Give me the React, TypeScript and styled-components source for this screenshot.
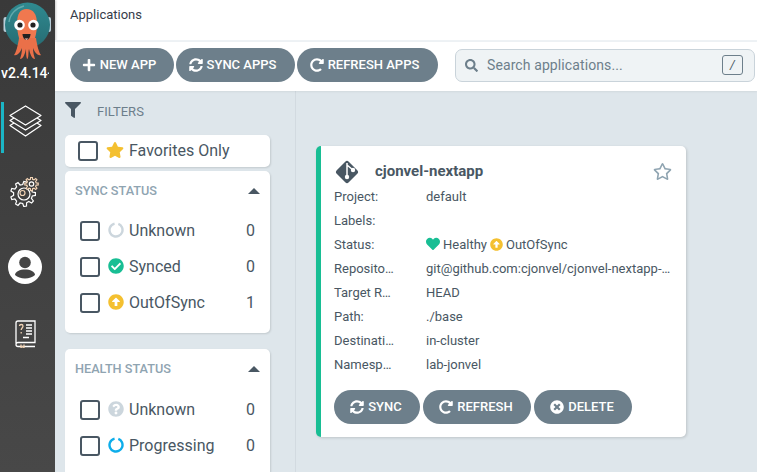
import React from "react";
import styled, { createGlobalStyle } from "styled-components";
import {
  FaArrowAltCircleUp,
  FaCheckCircle,
  FaFilter,
  FaHeart,
  FaPlus,
  FaQuestionCircle,
  FaRedoAlt,
  FaRegStar,
  FaSearch,
  FaStar,
  FaSyncAlt,
  FaTimesCircle,
} from "react-icons/fa";

const GlobalStyle = createGlobalStyle`
  html, body {
    margin: 0;
    height: 100%;
    overflow: hidden;
    background: #fff;
    font-family: Roboto, "Noto Sans", sans-serif;
  }
  #root { height: 100%; }
  * { box-sizing: border-box; }
`;

const Page = styled.div`
  display: flex;
  width: 757px;
  height: 472px;
  overflow: hidden;
`;

/* ---- sidebar ---- */

const Sidebar = styled.nav`
  flex: none;
  width: 55px;
  background: linear-gradient(180deg, #393939 0%, #484848 100%);
  box-shadow: 1px 0 2px rgba(0, 0, 0, 0.2);
  display: flex;
  flex-direction: column;
  color: #fff;
`;

const LogoBox = styled.div`
  height: 60px;
  display: flex;
  justify-content: center;
`;

const Version = styled.div`
  width: 48px;
  margin: 0 0 15px 1px;
  height: 27px;
  overflow: hidden;
  white-space: nowrap;
  font-size: 14px;
  font-weight: 500;
  line-height: 27px;
`;

const NavItem = styled.div<{ $h: number; $active?: boolean }>`
  height: ${(p) => p.$h}px;
  display: flex;
  align-items: ${(p) => (p.$active ? "flex-start" : "center")};
  justify-content: center;
  border-left: 3px solid ${(p) => (p.$active ? "#1bb5c5" : "transparent")};
  margin-left: 1px;
  padding: ${(p) => (p.$active ? "3px" : "0")} 9px 0 0;
`;

const Logo = () => (
  <svg width="53" height="60" viewBox="0 0 53 60">
    <defs>
      <linearGradient id="dome" x1="0" y1="0" x2="0" y2="1">
        <stop offset="0" stopColor="#2f8a90" />
        <stop offset="1" stopColor="#276c73" />
      </linearGradient>
    </defs>
    <rect x="2.500" y="17" width="4" height="15" rx="2" fill="#b8cdd8" />
    <rect x="46" y="17" width="4" height="15" rx="2" fill="#b8cdd8" />
    <circle cx="26.500" cy="25" r="22.500" fill="url(#dome)" />
    <path d="M8 22c1-8 7-14 15-16" fill="none" stroke="#62a9ac" strokeWidth="1.400" />
    <path
      d="M16 24c0-10 3-15 9.500-15S36 14 36 24c0 8-2 14-3 17H19c-1-3-3-9-3-17z"
      fill="#f0784f"
    />
    <path
      d="M18 38c-1 7-3 15-5 17 3 1 6-2 8-7 0 4-1 8-2 11 3 0 5-5 6-10 0 4 0 7 1 10 2 0 1-7 2-10 1 5 3 10 6 10-1-3-2-7-2-11 2 5 5 8 8 7-2-2-4-10-5-17z"
      fill="#ea7049"
    />
    <circle cx="18.500" cy="25" r="5.300" fill="#fff" />
    <circle cx="32.500" cy="25" r="5.300" fill="#fff" />
    <circle cx="19" cy="25" r="2.600" fill="#222" />
    <circle cx="32" cy="25" r="2.600" fill="#222" />
    <path d="M21.500 34h8c0 3-2 6-4 6s-4-3-4-6z" fill="#222" />
    <path d="M23.500 38.500h4l-2 1.500z" fill="#f6c5b8" />
  </svg>
);

const LayersIcon = () => (
  <svg width="33" height="32" viewBox="0 0 33 32" fill="none" stroke="#fff" strokeWidth="1.300" strokeLinejoin="round">
    <path d="M16.500 1 32 10.500 16.500 20 1 10.500Z" />
    <path d="M5 13 1 15.500 16.500 25 32 15.500 28 13" />
    <path d="M5 18 1 20.500 16.500 31 32 20.500 28 18" />
  </svg>
);

// outline of a cog wheel, teeth alternate between the two radii
const gearPoints = (cx: number, cy: number, outer: number, inner: number, teeth: number) => {
  const pts: string[] = [];
  for (let i = 0; i < teeth; i++) {
    const step = (2 * Math.PI) / teeth;
    const a = i * step;
    [
      [-0.3, inner],
      [-0.16, outer],
      [0.16, outer],
      [0.3, inner],
    ].forEach(([f, r]) => {
      pts.push(`${(cx + Math.cos(a + f * step) * r).toFixed(1)},${(cy + Math.sin(a + f * step) * r).toFixed(1)}`);
    });
  }
  return pts.join(" ");
};

const GearsIcon = () => (
  <svg width="30" height="30" viewBox="0 0 30 30" fill="none" stroke="#fff" strokeWidth="1.200">
    <polygon points={gearPoints(13, 17, 12.500, 9.500, 9)} />
    <circle cx="14" cy="17" r="6" />
    <circle cx="12.500" cy="16" r="2.500" stroke="#f2d3b4" />
    <polygon points={gearPoints(21.500, 7, 6.800, 4.800, 8)} fill="#3f3f3f" stroke="#f2d3b4" />
    <circle cx="21.500" cy="7" r="2.200" />
  </svg>
);

const UserIcon = () => (
  <svg width="34" height="34" viewBox="0 0 34 34">
    <circle cx="17" cy="17" r="17" fill="#fff" />
    <circle cx="17" cy="12.500" r="5.800" fill="#444" />
    <path d="M7 25c0-3.500 5-5.500 10-5.500S27 21.500 27 25c-2.500 2-6 3.500-10 3.500S9.500 27 7 25z" fill="#444" />
  </svg>
);

const BookIcon = () => (
  <svg width="21" height="28" viewBox="0 0 21 28" fill="none" stroke="#fff" strokeWidth="1.300">
    <path d="M1 23.500V3a2 2 0 0 1 2-2h17v21.500H3a2 2 0 0 0 0 4h17" />
    <path d="M6 24.500v3l1.500-1 1.500 1v-3" stroke="#f2d3b4" />
    <path d="M4.500 6c0-2 3.500-2 3.500 0S6.200 8 6.200 10M6.200 12v1.500" stroke="#f2d3b4" />
    <path d="M11 5h6M11 8h6M11 11h6M11 14h6M8 17.500h6" />
  </svg>
);

/* ---- header and toolbar ---- */

const Main = styled.main`
  flex: 1;
  min-width: 0;
  display: flex;
  flex-direction: column;
`;

const Header = styled.header`
  height: 42px;
  padding: 7px 15px 0;
  font-size: 13px;
  line-height: 15px;
  color: #363c4a;
  border-bottom: 2px solid #eef2f5;
  flex: none;
`;

const Toolbar = styled.div`
  height: 49px;
  flex: none;
  display: flex;
  align-items: flex-start;
  padding: 6px 0 0 15px;
  background: #fff;
  box-shadow: 0 1px 2px rgba(0, 0, 0, 0.06);
  position: relative;
`;

const ButtonRow = styled.div`
  display: flex;
  gap: 2px;
`;

const PillButton = styled.button<{ $w: number }>`
  width: ${(p) => p.$w}px;
  height: 34px;
  border: 0;
  border-radius: 17px;
  background: #6d7f8b;
  color: #fff;
  display: flex;
  align-items: center;
  justify-content: center;
  gap: 4px;
  padding: 0 2px 1px 0;
  font-family: inherit;
  font-size: 13px;
  font-weight: 500;
  svg {
    font-size: 14px;
    flex: none;
  }
`;

const ToolbarButton = styled(PillButton)`
  padding-right: 6px;
`;

const SearchBox = styled.div`
  flex: none;
  margin-left: 17px;
  width: 300px;
  height: 33px;
  margin-top: 1px;
  background: #eff3f5;
  border: 1px solid #c9d3da;
  border-radius: 7px;
  display: flex;
  align-items: center;
  padding: 0 11px 1px 9px;
  color: #6d7f8b;
  svg {
    font-size: 13px;
    flex: none;
  }
`;

const SearchText = styled.span`
  flex: 1;
  margin: 0 0 1px 9px;
  font-size: 14px;
  letter-spacing: 0.1px;
`;

const KeyHint = styled.span`
  width: 21px;
  height: 20px;
  border: 1px solid #6d7f8b;
  border-radius: 3px;
  font-size: 12px;
  display: flex;
  align-items: center;
  justify-content: center;
  font-style: italic;
  color: #495763;
`;

/* ---- content ---- */

const Content = styled.div`
  flex: 1;
  min-height: 0;
  display: flex;
  background: #dee6eb;
`;

const FilterColumn = styled.aside`
  flex: none;
  width: 241px;
  padding: 0 25px 0 10px;
  border-right: 1px solid #d2dae0;
  overflow: hidden;
`;

const FilterHead = styled.div`
  height: 44px;
  display: flex;
  align-items: flex-start;
  padding-top: 11px;
  color: #6d7f8b;
  font-size: 13px;
  gap: 16px;
  line-height: 19px;
  svg {
    color: #495763;
    font-size: 16px;
    flex: none;
  }
`;

const FilterPanel = styled.section`
  background: #fff;
  border-radius: 5px;
  box-shadow: 1px 1px 2px rgba(0, 0, 0, 0.12);
  margin-bottom: 16px;
  padding-bottom: 12px;
`;

const FavoritesPanel = styled.div`
  background: #fff;
  border-radius: 5px;
  box-shadow: 1px 1px 2px rgba(0, 0, 0, 0.12);
  height: 32px;
  margin-bottom: 4px;
  display: flex;
  align-items: center;
  padding-left: 13px;
  font-size: 16px;
  color: #495763;
  svg {
    color: #f4c030;
    font-size: 18px;
    margin: 0 5px 2px 8px;
  }
`;

const PanelTitle = styled.div`
  height: 38px;
  display: flex;
  align-items: center;
  justify-content: space-between;
  padding: 0 10px;
  font-size: 12.7px;
  font-weight: 500;
  color: #8fa4b1;
`;

const Caret = styled.span`
  width: 0;
  height: 0;
  margin-top: 2px;
  border-left: 6px solid transparent;
  border-right: 6px solid transparent;
  border-bottom: 6px solid #495763;
`;

const FilterList = styled.div<{ $top: number }>`
  margin-top: ${(p) => p.$top}px;
`;

const FilterRow = styled.div`
  height: 36px;
  display: flex;
  align-items: center;
  padding: 0 15px;
  font-size: 16px;
  color: #495763;
`;

const CheckBox = styled.span`
  flex: none;
  width: 20px;
  height: 20px;
  border: 2px solid #495763;
  border-radius: 3px;
  background: #fff;
`;

const RowIcon = styled.span<{ $color: string }>`
  flex: none;
  width: 16px;
  height: 16px;
  margin: 0 5px 2px 8px;
  color: ${(p) => p.$color};
  display: flex;
  svg {
    width: 16px;
    height: 16px;
  }
`;

const RowLabel = styled.span`
  flex: 1;
  margin-bottom: 2px;
`;

const RowCount = styled.span`
  margin-bottom: 2px;
`;

const RingIcon = () => (
  <svg viewBox="0 0 16 16" fill="none" stroke="currentColor" strokeWidth="2.400">
    <circle cx="8" cy="8" r="6.500" strokeDasharray="36 4.800" transform="rotate(-69 8 8)" />
  </svg>
);

const Cards = styled.div`
  flex: 1;
  padding: 55px 0 0 20px;
`;

const AppCard = styled.article`
  width: 370px;
  height: 291px;
  background: #fff;
  border-left: 5px solid #18be94;
  border-radius: 5px;
  box-shadow: 1px 1px 3px rgba(0, 0, 0, 0.15);
  padding: 12px 14px 0 13px;
`;

const CardTitle = styled.div`
  display: flex;
  align-items: center;
  height: 26px;
  font-size: 15px;
  font-weight: 700;
  color: #495763;
`;

const GitMark = styled.svg`
  flex: none;
  width: 24px;
  height: 24px;
  margin: 2px 16px 0 1px;
`;

const GitIcon = () => (
  <GitMark viewBox="0 0 24 24">
    <rect x="3.500" y="3.500" width="17" height="17" rx="2.500" transform="rotate(45 12 12)" fill="#495763" />
    <path d="M12 3V17M12 5l6 5" fill="none" stroke="#fff" strokeWidth="1.500" />
    <circle cx="12" cy="17" r="2.200" fill="#fff" />
    <circle cx="18" cy="10" r="2.200" fill="#fff" />
  </GitMark>
);

const TitleText = styled.span`
  flex: 1;
`;

const FavStar = styled(FaRegStar)`
  font-size: 19px;
  color: #8fa4b1;
`;

const InfoRow = styled.div`
  display: flex;
  height: 24px;
  align-items: center;
  font-size: 13px;
  color: #495763;
`;

const InfoKey = styled.span`
  flex: none;
  width: 92px;
`;

const InfoValue = styled.span`
  display: flex;
  align-items: center;
  white-space: nowrap;
`;

const StatusIcon = styled.span<{ $color: string; $size: number }>`
  display: flex;
  color: ${(p) => p.$color};
  margin-right: 3px;
  svg {
    width: ${(p) => p.$size}px;
    height: ${(p) => p.$size}px;
  }
`;

const Gap = styled.span`
  width: 3px;
`;

const CardActions = styled.div`
  display: flex;
  gap: 3px;
  margin-top: 14px;
`;

const filters = {
  sync: [
    { label: "Unknown", count: 0, color: "#ccd6dd", icon: <RingIcon /> },
    { label: "Synced", count: 0, color: "#18be94", icon: <FaCheckCircle /> },
    { label: "OutOfSync", count: 1, color: "#f4c030", icon: <FaArrowAltCircleUp /> },
  ],
  health: [
    { label: "Unknown", count: 0, color: "#ccd6dd", icon: <FaQuestionCircle /> },
    { label: "Progressing", count: 0, color: "#0dadea", icon: <RingIcon /> },
  ],
};

const info: [string, string][] = [
  ["Reposito…", "git@github.com:cjonvel/cjonvel-nextapp-…"],
  ["Target R…", "HEAD"],
  ["Path:", "./base"],
  ["Destinati…", "in-cluster"],
  ["Namesp…", "lab-jonvel"],
];

const Panel: React.FC<{ title: string; top: number; rows: typeof filters.sync }> = ({ title, top, rows }) => (
  <FilterPanel>
    <PanelTitle>
      {title}
      <Caret />
    </PanelTitle>
    <FilterList $top={top}>
      {rows.map((r) => (
        <FilterRow key={r.label}>
          <CheckBox />
          <RowIcon $color={r.color}>{r.icon}</RowIcon>
          <RowLabel>{r.label}</RowLabel>
          <RowCount>{r.count}</RowCount>
        </FilterRow>
      ))}
    </FilterList>
  </FilterPanel>
);

export default function App() {
  return (
    <Page>
      <GlobalStyle />
      <Sidebar>
        <LogoBox>
          <Logo />
        </LogoBox>
        <Version>v2.4.14+</Version>
        <NavItem $h={51} $active>
          <LayersIcon />
        </NavItem>
        <NavItem $h={77}>
          <GearsIcon />
        </NavItem>
        <NavItem $h={74}>
          <UserIcon />
        </NavItem>
        <NavItem $h={59}>
          <BookIcon />
        </NavItem>
      </Sidebar>
      <Main>
        <Header>Applications</Header>
        <Toolbar>
          <ButtonRow>
            <ToolbarButton $w={104}>
              <FaPlus />
              NEW APP
            </ToolbarButton>
            <ToolbarButton $w={119}>
              <FaSyncAlt />
              SYNC APPS
            </ToolbarButton>
            <ToolbarButton $w={141}>
              <FaRedoAlt />
              REFRESH APPS
            </ToolbarButton>
          </ButtonRow>
          <SearchBox>
            <FaSearch />
            <SearchText>Search applications...</SearchText>
            <KeyHint>/</KeyHint>
          </SearchBox>
        </Toolbar>
        <Content>
          <FilterColumn>
            <FilterHead>
              <FaFilter />
              FILTERS
            </FilterHead>
            <FavoritesPanel>
              <CheckBox />
              <FaStar />
              <RowLabel>Favorites Only</RowLabel>
            </FavoritesPanel>
            <Panel title="SYNC STATUS" top={4} rows={filters.sync} />
            <Panel title="HEALTH STATUS" top={5} rows={filters.health} />
          </FilterColumn>
          <Cards>
            <AppCard>
              <CardTitle>
                <GitIcon />
                <TitleText>cjonvel-nextapp</TitleText>
                <FavStar />
              </CardTitle>
              <InfoRow>
                <InfoKey>Project:</InfoKey>
                <InfoValue>default</InfoValue>
              </InfoRow>
              <InfoRow>
                <InfoKey>Labels:</InfoKey>
              </InfoRow>
              <InfoRow>
                <InfoKey>Status:</InfoKey>
                <InfoValue>
                  <StatusIcon $color="#18be94" $size={14}>
                    <FaHeart />
                  </StatusIcon>
                  Healthy
                  <Gap />
                  <StatusIcon $color="#f4c030" $size={13}>
                    <FaArrowAltCircleUp />
                  </StatusIcon>
                  OutOfSync
                </InfoValue>
              </InfoRow>
              {info.map(([k, v]) => (
                <InfoRow key={k}>
                  <InfoKey>{k}</InfoKey>
                  <InfoValue>{v}</InfoValue>
                </InfoRow>
              ))}
              <CardActions>
                <PillButton $w={86}>
                  <FaSyncAlt />
                  SYNC
                </PillButton>
                <PillButton $w={108}>
                  <FaRedoAlt />
                  REFRESH
                </PillButton>
                <PillButton $w={98}>
                  <FaTimesCircle />
                  DELETE
                </PillButton>
              </CardActions>
            </AppCard>
          </Cards>
        </Content>
      </Main>
    </Page>
  );
}
